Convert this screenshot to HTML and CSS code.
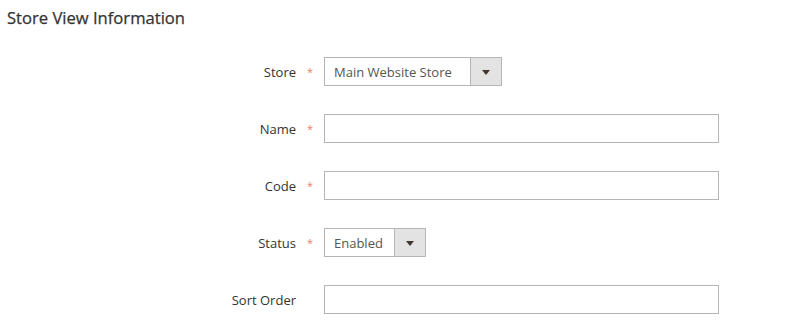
FILE: index.html
```html
<!DOCTYPE html>
<html lang="en">
<head>
  <meta charset="UTF-8" />
  <meta name="viewport" content="width=device-width, initial-scale=1.0" />
  <title>Store View Information</title>
  <link rel="stylesheet" href="styles.css">
</head>
<body>
  <h2 class="legend">Store View Information</h2>
  <form class="fieldset">
    <div class="field required">
      <label class="field-label">Store</label>
      <div class="select" style="width: 178px;">
        <span class="select-value">Main Website Store</span>
        <span class="select-btn"><span class="caret"></span></span>
      </div>
    </div>

    <div class="field required">
      <label class="field-label">Name</label>
      <input type="text" class="input" />
    </div>

    <div class="field required">
      <label class="field-label">Code</label>
      <input type="text" class="input" />
    </div>

    <div class="field required">
      <label class="field-label">Status</label>
      <div class="select" style="width: 102px;">
        <span class="select-value">Enabled</span>
        <span class="select-btn"><span class="caret"></span></span>
      </div>
    </div>

    <div class="field">
      <label class="field-label">Sort Order</label>
      <input type="text" class="input" />
    </div>
  </form>
</body>
</html>
```

FILE: styles.css
```css
body {
  margin: 0;
  font-family: "Open Sans", "Liberation Sans", sans-serif;
  color: #333;
  background: #fff;
}
.legend {
  margin: 0;
  padding: 7px 0 0 7px;
  font-size: 16.6px;
  font-weight: 400;
  -webkit-text-stroke: 0.25px #333;
  line-height: 22px;
  color: #333;
}
.fieldset {
  padding-top: 28px;
  display: flex;
  flex-direction: column;
  gap: 28px;
}
.field {
  display: flex;
  align-items: center;
  height: 29px;
}
.field-label {
  width: 296px;
  text-align: right;
  font-size: 13px;
  font-weight: 400;
  margin-right: 28px;
  position: relative;
}
.field.required .field-label::after {
  content: "*";
  position: absolute;
  right: -17px;
  top: 1px;
  color: #f07c6c;
  font-size: 11px;
}
.input {
  width: 395px;
  height: 29px;
  box-sizing: border-box;
  border: 1px solid #b5b5b5;
  margin: 0;
  padding: 0 9px;
  font-family: inherit;
  font-size: 13px;
}
.select {
  height: 29px;
  box-sizing: border-box;
  border: 1px solid #b5b5b5;
  display: flex;
  align-items: stretch;
  font-size: 13px;
}
.select-value {
  flex: 1;
  display: flex;
  align-items: center;
  padding-left: 9px;
  white-space: nowrap;
  color: #555;
}
.select-btn {
  width: 30px;
  background: #e3e3e3;
  border-left: 1px solid #b5b5b5;
  display: flex;
  align-items: center;
  justify-content: center;
}
.caret {
  width: 0;
  height: 0;
  border-left: 4px solid transparent;
  border-right: 4px solid transparent;
  border-top: 5px solid #41362f;
  margin-top: 1px;
}
```
